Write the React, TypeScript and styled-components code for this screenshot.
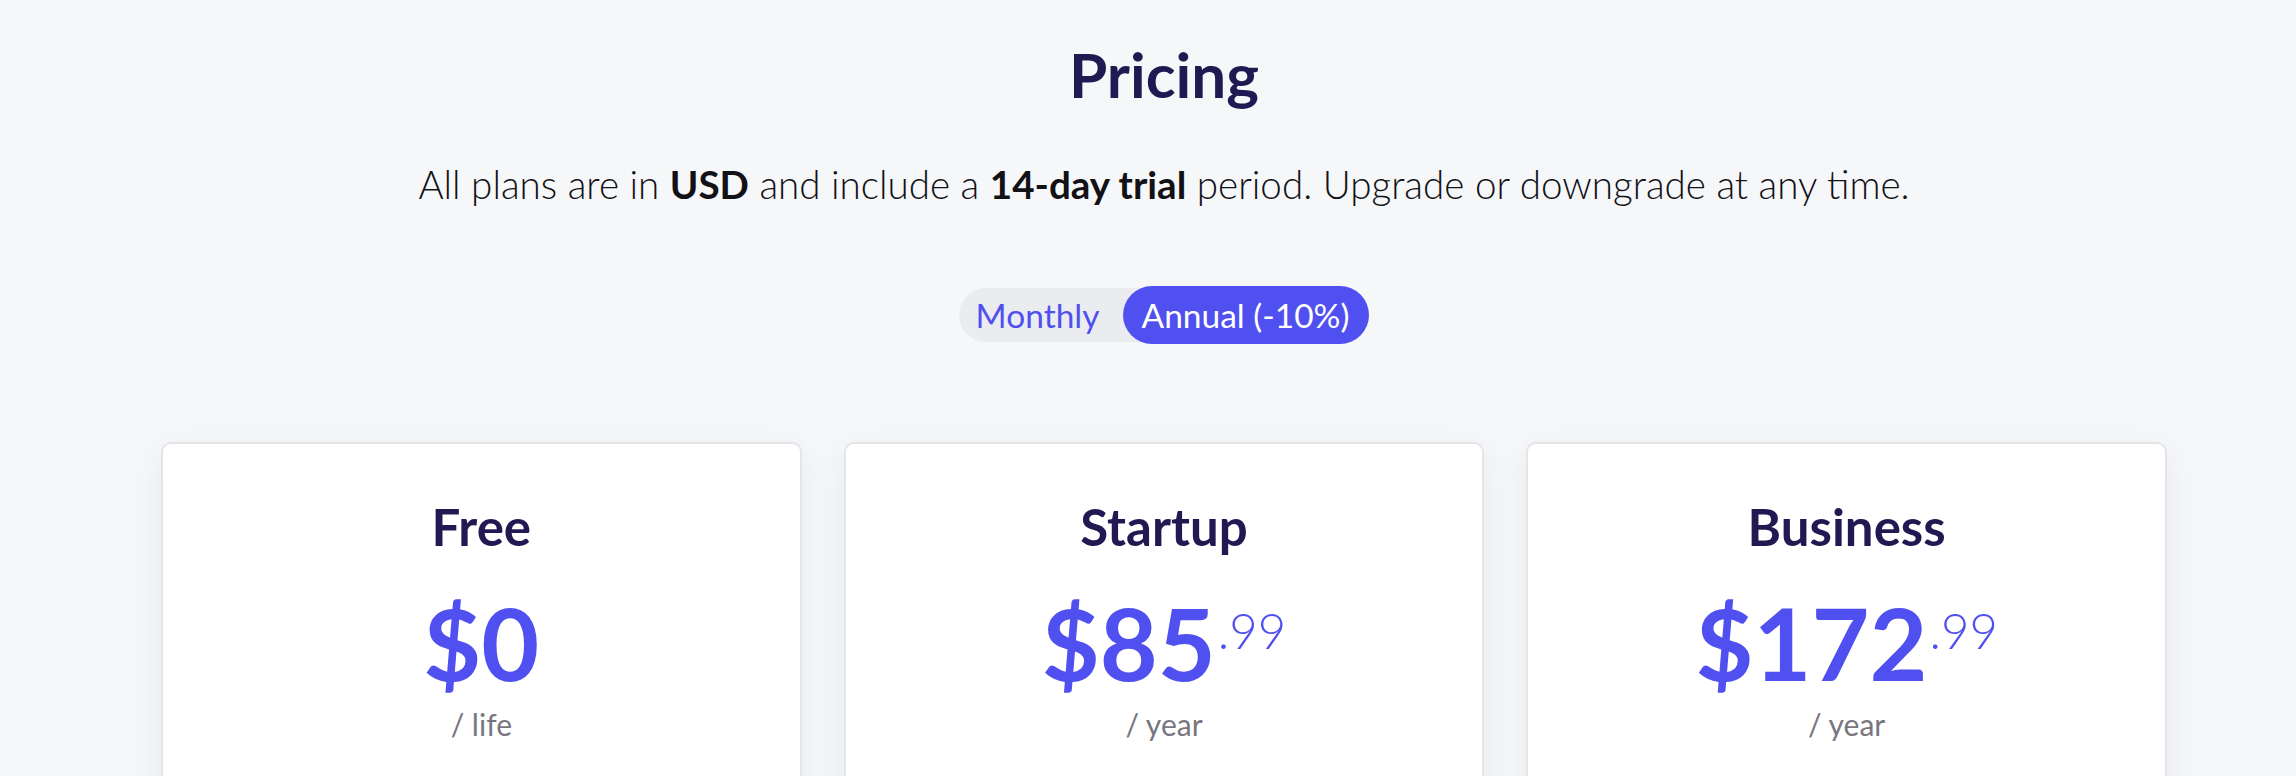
import React from "react";
import styled, { createGlobalStyle } from "styled-components";

const GlobalStyle = createGlobalStyle`
  html, body {
    margin: 0;
    padding: 0;
    background: #f6f7f9;
    font-family: Lato, "Open Sans", sans-serif;
  }
  * { box-sizing: border-box; }
`;

const Page = styled.main`
  padding: 37px 0 60px 32px;
  display: flex;
  flex-direction: column;
  align-items: center;
`;

const Title = styled.h1`
  margin: 0;
  font-size: 62px;
  line-height: 1.2;
  font-weight: 700;
  color: #211a52;
`;

const Subtitle = styled.p`
  margin: 50px 0 0;
  font-family: "Lato Light", Lato, sans-serif;
  font-size: 38.6px;
  line-height: 1.2;
  font-weight: 300;
  color: #111116;
`;

const Strong = styled.strong`
  font-family: Lato, sans-serif;
  font-weight: 700;
`;

const Toggle = styled.div`
  margin-top: 80px;
  height: 54px;
  display: flex;
  align-items: center;
  background: #ebecf0;
  border-radius: 27px;
`;

const ToggleOption = styled.button<{ $active?: boolean }>`
  height: ${(p) => (p.$active ? "58px" : "54px")};
  border: none;
  border-radius: 29px;
  padding: ${(p) => (p.$active ? "0 20px 0 19px" : "0 23px 0 17px")};
  font-family: Lato, sans-serif;
  font-size: 33.5px;
  font-weight: 400;
  cursor: pointer;
  background: ${(p) => (p.$active ? "#5050f0" : "transparent")};
  color: ${(p) => (p.$active ? "#ffffff" : "#5050f0")};
`;

const Cards = styled.section`
  margin-top: 100px;
  width: 100%;
  padding: 0 129px;
  display: grid;
  grid-template-columns: repeat(3, 1fr);
  gap: 42px;
`;

const Card = styled.article`
  background: #ffffff;
  border: 2px solid #e4e5e9;
  border-radius: 10px;
  box-shadow: 0 8px 36px rgba(20, 20, 40, 0.06);
  min-height: 520px;
  padding-top: 52px;
  display: flex;
  flex-direction: column;
  align-items: center;
`;

const PlanName = styled.h2`
  margin: 0;
  font-size: 51px;
  line-height: 1.2;
  font-weight: 700;
  color: #211a52;
`;

const PriceRow = styled.div`
  margin-top: 35px;
  display: flex;
  align-items: flex-start;
  color: #5050f0;
`;

const Amount = styled.span`
  font-size: 100px;
  line-height: 1;
  font-weight: 700;
`;

const Cents = styled.span`
  margin-top: 14px;
  margin-left: 2px;
  font-family: "Lato Light", Lato, sans-serif;
  font-size: 49px;
  line-height: 1;
  font-weight: 300;
`;

const Period = styled.div`
  margin-top: 14px;
  font-size: 30px;
  line-height: 1.2;
  font-weight: 400;
  color: #77767f;
`;

const plans = [
  { name: "Free", amount: "$0", cents: "", period: "/ life" },
  { name: "Startup", amount: "$85", cents: ".99", period: "/ year" },
  { name: "Business", amount: "$172", cents: ".99", period: "/ year" },
];

export default function App() {
  return (
    <>
      <GlobalStyle />
      <Page>
        <Title>Pricing</Title>
        <Subtitle>
          All plans are in <Strong>USD</Strong> and include a <Strong>14-day trial</Strong> period.
          Upgrade or downgrade at any time.
        </Subtitle>
        <Toggle>
          <ToggleOption>Monthly</ToggleOption>
          <ToggleOption $active>Annual (-10%)</ToggleOption>
        </Toggle>
        <Cards>
          {plans.map((p) => (
            <Card key={p.name}>
              <PlanName>{p.name}</PlanName>
              <PriceRow>
                <Amount>{p.amount}</Amount>
                {p.cents && <Cents>{p.cents}</Cents>}
              </PriceRow>
              <Period>{p.period}</Period>
            </Card>
          ))}
        </Cards>
      </Page>
    </>
  );
}
